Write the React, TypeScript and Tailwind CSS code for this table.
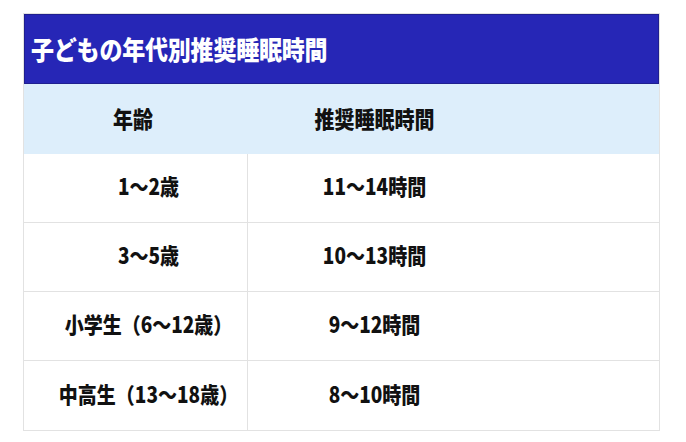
export default function App() {
  const rows = [
    ["1〜2歳", "11〜14時間"],
    ["3〜5歳", "10〜13時間"],
    ["小学生（6〜12歳）", "9〜12時間"],
    ["中高生（13〜18歳）", "8〜10時間"],
  ];
  return (
    <div
      className="w-[686px] h-[442px] bg-white pt-[13px] pl-[23px]"
      style={{ fontFamily: '"Noto Sans CJK JP", "Noto Sans", sans-serif' }}
    >
      <div className="w-[637px] border border-[#e2e2e2]">
        <div className="h-[70px] bg-[#2626b6] border border-[#1f1f8f] flex items-center pl-[6px] text-white text-[23px] font-black tracking-[-0.2px]">
          <span className="inline-block scale-y-[1.15]">子どもの年代別推奨睡眠時間</span>
        </div>
        <div className="grid grid-cols-[224px_1fr] h-[70px] bg-[#ddeefb] items-center text-[20px] font-black text-[#111]">
          <div className="text-center pr-[6px]">
            <span className="inline-block scale-y-[1.15]">年齢</span>
          </div>
          <div className="text-center pr-[158px]">
            <span className="inline-block scale-y-[1.15]">推奨睡眠時間</span>
          </div>
        </div>
        {rows.map((r, i) => (
          <div
            key={i}
            className={`grid grid-cols-[224px_1fr] h-[69px] text-[19px] font-black text-[#111] ${i < rows.length - 1 ? "border-b border-[#e2e2e2]" : ""}`}
          >
            <div className="flex items-center justify-center border-r border-[#e2e2e2] pl-[26px] pb-[3px]">
              <span className="inline-block scale-y-[1.15]">{r[0]}</span>
            </div>
            <div className="flex items-center justify-center pr-[158px] pb-[3px]">
              <span className="inline-block scale-y-[1.15]">{r[1]}</span>
            </div>
          </div>
        ))}
      </div>
    </div>
  );
}
